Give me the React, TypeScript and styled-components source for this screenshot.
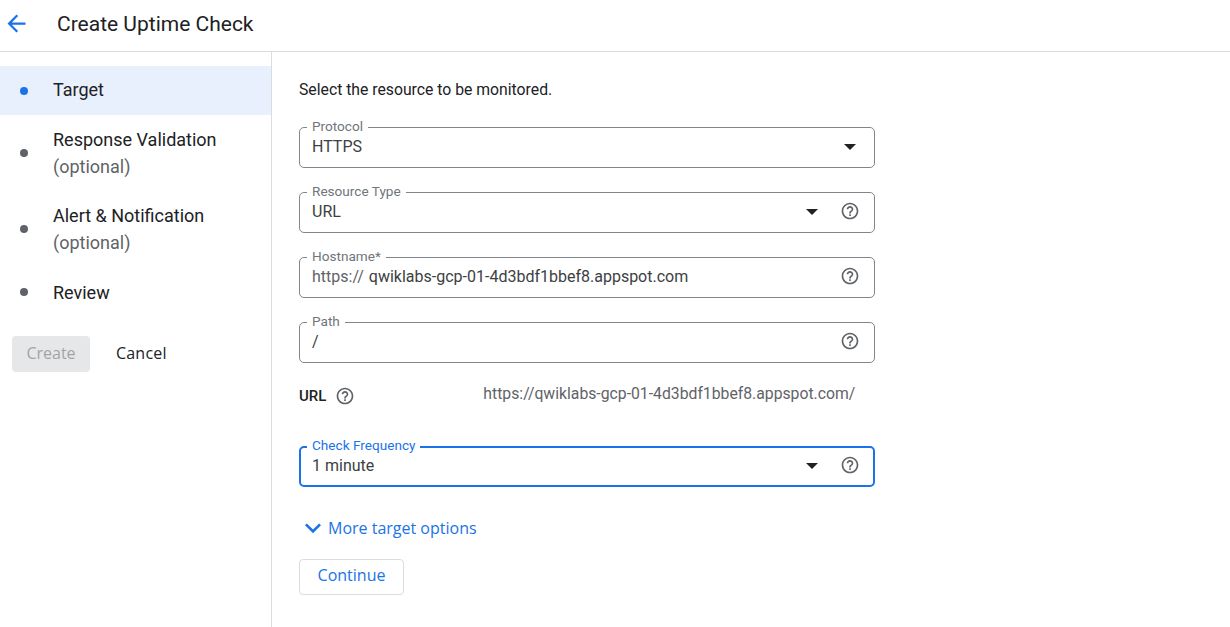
import React from 'react';
import styled, { createGlobalStyle } from 'styled-components';

const GlobalStyle = createGlobalStyle`
  html, body {
    margin: 0;
    padding: 0;
    height: 100%;
    background: #fff;
    overflow: hidden;
    font-family: Roboto, "Liberation Sans", sans-serif;
    color: #202124;
  }
`;

const Page = styled.div`
  display: flex;
  flex-direction: column;
  height: 627px;
`;

const Header = styled.header`
  display: flex;
  align-items: center;
  height: 51px;
  border-bottom: 1px solid #dadce0;
  flex-shrink: 0;
`;

const BackButton = styled.span`
  display: flex;
  width: 27px;
  height: 27px;
  margin-left: 3px;
  margin-right: 27px;
  margin-bottom: 5px;
  color: #1a73e8;
`;

const Title = styled.h1`
  margin: 0 0 3px;
  font-size: 21px;
  font-weight: 400;
  line-height: 24px;
  color: #202124;
`;

const Body = styled.div`
  display: flex;
  flex: 1;
`;

const Sidebar = styled.nav`
  width: 271px;
  flex-shrink: 0;
  border-right: 1px solid #dadce0;
  padding-top: 14px;
`;

const Step = styled.div<{ $active?: boolean; $tall?: boolean }>`
  display: flex;
  align-items: center;
  height: ${p => (p.$tall ? 76 : p.$active ? 49 : 50)}px;
  background: ${p => (p.$active ? '#e8f0fe' : 'transparent')};
`;

const Dot = styled.span<{ $active?: boolean }>`
  width: 8px;
  height: 8px;
  border-radius: 50%;
  margin-left: 20px;
  margin-right: 25px;
  flex-shrink: 0;
  background: ${p => (p.$active ? '#1a73e8' : '#5f6368')};
`;

const StepText = styled.div<{ $raised?: boolean }>`
  font-size: 18px;
  line-height: 27px;
  color: #202124;
  margin-bottom: ${p => (p.$raised ? 2 : 0)}px;
`;

const Optional = styled.div`
  color: #5f6368;
`;

const SideActions = styled.div`
  display: flex;
  align-items: center;
  margin-top: 19px;
  padding-left: 12px;
  gap: 26px;
`;

const CreateButton = styled.button`
  width: 78px;
  height: 36px;
  border: none;
  border-radius: 4px;
  background: #e6e7e8;
  color: #a2a4a6;
  font-family: "Open Sans", Roboto, sans-serif;
  font-size: 16px;
  font-weight: 500;
  padding: 0 0 2px;
`;

const CancelButton = styled.button`
  border: none;
  background: none;
  padding: 0 0 2px;
  color: #202124;
  font-family: "Open Sans", Roboto, sans-serif;
  font-size: 16px;
  font-weight: 500;
  letter-spacing: 0.2px;
`;

const Main = styled.main`
  flex: 1;
  padding: 28px 0 0 27px;
`;

const Intro = styled.p`
  margin: 0 0 27px;
  font-size: 15.75px;
  line-height: 20px;
  color: #202124;
`;

const Form = styled.div`
  display: flex;
  flex-direction: column;
  gap: 24px;
  width: 576px;
`;

const Help = styled.span`
  display: flex;
  width: 20px;
  height: 20px;
  color: #5f6368;
  flex-shrink: 0;
`;

const Field = styled.div<{ $focused?: boolean }>`
  position: relative;
  display: flex;
  align-items: center;
  box-sizing: border-box;
  height: 41px;
  border: ${p => (p.$focused ? '2px solid #1a73e8' : '1px solid #80868b')};
  padding: 0 ${p => (p.$focused ? 13 : 14)}px 2px ${p => (p.$focused ? 11 : 12)}px;
  border-radius: 5px;
  font-size: 16px;
  color: #3c4043;

  ${Help} {
    margin-bottom: 2px;
  }
`;

const Legend = styled.label<{ $focused?: boolean }>`
  position: absolute;
  top: ${p => (p.$focused ? -11 : -10)}px;
  left: ${p => (p.$focused ? 6 : 7)}px;
  padding: 0 5px;
  background: #fff;
  font-size: 13.6px;
  line-height: 16px;
  color: ${p => (p.$focused ? '#1a73e8' : '#70757a')};
`;

const Value = styled.span`
  flex: 1;
  white-space: nowrap;
`;

const Prefix = styled.span`
  color: #5f6368;
  margin-right: 5px;
`;

const Caret = styled.span<{ $last?: boolean }>`
  width: 0;
  height: 0;
  border-left: 6px solid transparent;
  border-right: 6px solid transparent;
  border-top: 6px solid #202124;
  margin-right: ${p => (p.$last ? 4 : 22)}px;
`;

const UrlRow = styled.div`
  display: flex;
  align-items: center;
  height: 36px;
  margin-top: -9px;
  margin-bottom: 8px;
`;

const UrlLabel = styled.span`
  font-size: 15px;
  font-weight: 500;
  color: #202124;
  margin-right: 9px;
`;

const UrlValue = styled.span`
  margin-left: 128px;
  margin-top: -6px;
  font-size: 15.75px;
  color: #5f6368;
  white-space: nowrap;
`;

const MoreLink = styled.div`
  display: flex;
  align-items: center;
  margin-top: 29px;
  margin-left: -2px;
  color: #1a73e8;
  font-family: "Open Sans", Roboto, sans-serif;
  font-size: 16px;
  font-weight: 500;
  height: 24px;

  svg {
    margin-right: -1px;
  }
`;

const ContinueButton = styled.button`
  display: block;
  margin-top: 19px;
  width: 105px;
  height: 36px;
  background: #fff;
  border: 1px solid #dadce0;
  border-radius: 4px;
  color: #1a73e8;
  font-family: "Open Sans", Roboto, sans-serif;
  font-size: 16px;
  font-weight: 500;
  padding: 0 0 4px;
`;

const HelpIcon = () => (
  <Help>
    <svg viewBox="0 0 24 24" width="20" height="20" fill="currentColor">
      <path d="M11 18h2v-2h-2v2zm1-16C6.48 2 2 6.48 2 12s4.48 10 10 10 10-4.48 10-10S17.52 2 12 2zm0 18c-4.41 0-8-3.59-8-8s3.59-8 8-8 8 3.59 8 8-3.59 8-8 8zm0-14c-2.21 0-4 1.79-4 4h2c0-1.1.9-2 2-2s2 .9 2 2c0 2-3 1.75-3 5h2c0-2.25 3-2.5 3-5 0-2.21-1.79-4-4-4z" />
    </svg>
  </Help>
);

const App = () => {
  return (
    <Page>
      <GlobalStyle />
      <Header>
        <BackButton>
          <svg viewBox="0 0 24 24" width="27" height="27" fill="currentColor">
            <path d="M20 11H7.83l5.59-5.59L12 4l-8 8 8 8 1.41-1.41L7.83 13H20v-2z" />
          </svg>
        </BackButton>
        <Title>Create Uptime Check</Title>
      </Header>
      <Body>
        <Sidebar>
          <Step $active>
            <Dot $active />
            <StepText $raised>Target</StepText>
          </Step>
          <Step $tall>
            <Dot />
            <StepText>
              Response Validation
              <Optional>(optional)</Optional>
            </StepText>
          </Step>
          <Step $tall>
            <Dot />
            <StepText>
              Alert &amp; Notification
              <Optional>(optional)</Optional>
            </StepText>
          </Step>
          <Step>
            <Dot />
            <StepText>Review</StepText>
          </Step>
          <SideActions>
            <CreateButton disabled>Create</CreateButton>
            <CancelButton>Cancel</CancelButton>
          </SideActions>
        </Sidebar>
        <Main>
          <Intro>Select the resource to be monitored.</Intro>
          <Form>
            <Field>
              <Legend>Protocol</Legend>
              <Value>HTTPS</Value>
              <Caret $last />
            </Field>
            <Field>
              <Legend>Resource Type</Legend>
              <Value>URL</Value>
              <Caret />
              <HelpIcon />
            </Field>
            <Field>
              <Legend>Hostname*</Legend>
              <Value>
                <Prefix>https://</Prefix>qwiklabs-gcp-01-4d3bdf1bbef8.appspot.com
              </Value>
              <HelpIcon />
            </Field>
            <Field>
              <Legend>Path</Legend>
              <Value>/</Value>
              <HelpIcon />
            </Field>
            <UrlRow>
              <UrlLabel>URL</UrlLabel>
              <HelpIcon />
              <UrlValue>https://qwiklabs-gcp-01-4d3bdf1bbef8.appspot.com/</UrlValue>
            </UrlRow>
            <Field $focused>
              <Legend $focused>Check Frequency</Legend>
              <Value>1 minute</Value>
              <Caret />
              <HelpIcon />
            </Field>
          </Form>
          <MoreLink>
            <svg viewBox="0 0 24 24" width="32" height="32" fill="currentColor">
              <path d="M7.41 8.59 12 13.17l4.59-4.58L18 10l-6 6-6-6z" />
            </svg>
            More target options
          </MoreLink>
          <ContinueButton>Continue</ContinueButton>
        </Main>
      </Body>
    </Page>
  );
};

export default App;
